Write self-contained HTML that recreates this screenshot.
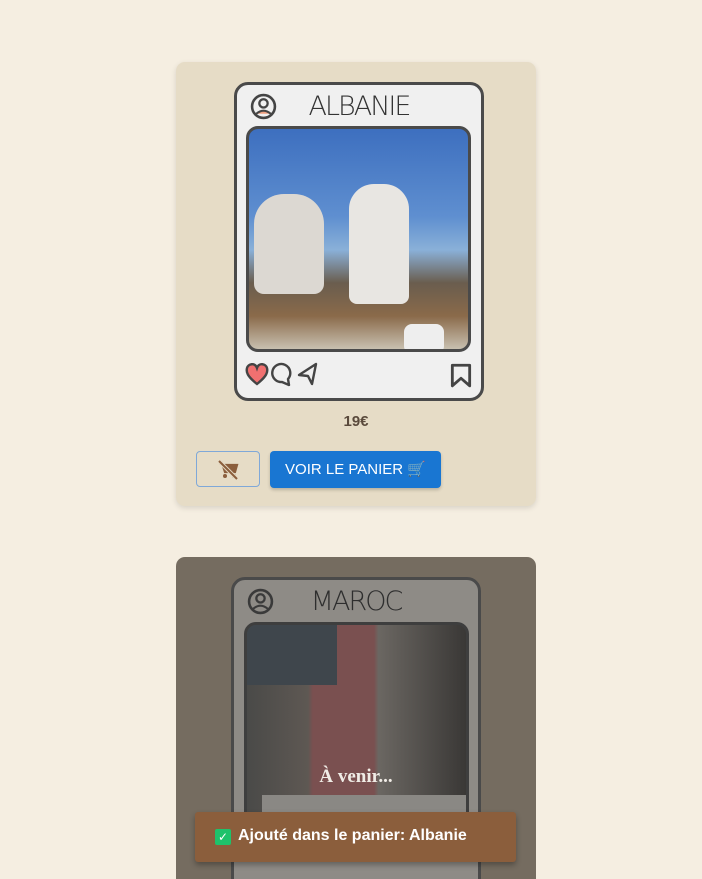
<!DOCTYPE html>
<html><head><meta charset="utf-8"><style>
html,body{margin:0;width:702px;height:879px;overflow:hidden}
body{background:#f5eee1;position:relative;font-family:"Liberation Sans",sans-serif}
.card{position:absolute;left:176px;width:360px;border-radius:9px;overflow:hidden}
.frame{position:absolute;width:244px;border:3px solid #4a4a4a;border-radius:14px;background:#f0f0f0}
.title{position:absolute;left:0;right:0;top:6px;text-align:center;font-family:"DejaVu Sans",sans-serif;font-size:27px;font-weight:200;letter-spacing:-2px;color:#333}
.photo{position:absolute;left:9px;width:219px;height:220px;border:3px solid #4a4a4a;border-radius:12px;overflow:hidden}
</style></head><body>
<div class="card" style="top:62px;height:444px;background:#e6dcc6;box-shadow:0 2px 6px rgba(0,0,0,.12)">
 <div class="frame" style="left:58px;top:20px;height:313px">
  <svg style="position:absolute;left:13px;top:8px" width="27" height="27" viewBox="0 0 26 26"><circle cx="13" cy="13" r="11" fill="none" stroke="#444" stroke-width="2.5"/><circle cx="13" cy="10" r="4" fill="none" stroke="#444" stroke-width="2.2"/><path d="M6 20q7-6 14 0" fill="#f0a080" stroke="#444" stroke-width="2"/></svg>
  <div class="title">ALBANIE</div>
  <div class="photo" style="top:41px;background:linear-gradient(180deg,#3d6fbf 0%,#5f8fd0 40%,#8ab0d8 55%,#6a5d4e 70%,#8a6a4a 85%,#c8c0b0 100%)">
   <div style="position:absolute;left:100px;top:55px;width:60px;height:120px;background:#e8e6e2;border-radius:25px 25px 8px 8px"></div>
   <div style="position:absolute;left:5px;top:65px;width:70px;height:100px;background:#dcd8d2;border-radius:30px 30px 10px 10px"></div>
   <div style="position:absolute;left:155px;top:195px;width:40px;height:30px;background:#eee;border-radius:8px"></div>
  </div>
  <svg style="position:absolute;left:8px;top:276px" width="80" height="26" viewBox="0 0 80 26"><path d="M12 23C2 15 1 11 2 7s8-6 10 0c2-6 9-4 10 0s0 8-10 16z" fill="#f07070" stroke="#444" stroke-width="2.4"/><path d="M37 21a9 9 0 1 1 6-3l1 6z" fill="none" stroke="#444" stroke-width="2.4" stroke-linejoin="round"/><path d="M54 14l17-11-4 20-4-8z" fill="none" stroke="#444" stroke-width="2.4" stroke-linejoin="round"/></svg>
  <svg style="position:absolute;left:212px;top:277px" width="24" height="26" viewBox="0 0 22 24"><path d="M3 3h16v19l-8-7-8 7z" fill="none" stroke="#444" stroke-width="2.6" stroke-linejoin="round"/></svg>
 </div>
 <div style="position:absolute;left:0;right:0;top:351px;text-align:center;font-weight:bold;font-size:15px;color:#5a4a3c">19€</div>
 <div style="position:absolute;left:20px;top:389px;width:62px;height:34px;border:1px solid #7fa8d8;border-radius:4px"><svg style="position:absolute;left:20px;top:8px" width="22" height="20" viewBox="0 0 22 20"><path d="M2 3h3l3 9h10l2-7H7" fill="#8b5e3c" stroke="#8b5e3c" stroke-width="2.2"/><circle cx="8" cy="16" r="2" fill="#8b5e3c"/><circle cx="17" cy="16" r="2" fill="#8b5e3c"/><path d="M2 1l18 18" stroke="#e6dcc6" stroke-width="4"/><path d="M2 1l18 18" stroke="#8b5e3c" stroke-width="2"/></svg></div>
 <div style="position:absolute;left:94px;top:389px;width:171px;height:37px;background:#1976d2;border-radius:4px;box-shadow:0 2px 3px rgba(0,0,0,.2);color:#fff;font-size:15px;line-height:37px;text-align:center">VOIR LE PANIER 🛒</div>
</div>
<div class="card" style="top:557px;height:340px;background:#756c60">
 <div class="frame" style="left:55px;top:20px;height:330px;background:#8e8b86">
  <svg style="position:absolute;left:13px;top:8px" width="27" height="27" viewBox="0 0 26 26"><circle cx="13" cy="13" r="11" fill="none" stroke="#3a3a3a" stroke-width="2.5"/><circle cx="13" cy="10" r="4" fill="none" stroke="#3a3a3a" stroke-width="2.2"/><path d="M6 20q7-6 14 0" fill="none" stroke="#3a3a3a" stroke-width="2"/></svg>
  <div class="title" style="color:#2e2e2e">MAROC</div>
  <div class="photo" style="top:42px;left:10px;border-color:#3e3e3e;background:linear-gradient(90deg,#4a4a48 0%,#5e5853 28%,#7a5050 30%,#7a5050 58%,#6b6762 60%,#3a3836 100%)">
   <div style="position:absolute;left:0;top:0;width:90px;height:60px;background:#3f464c"></div>
   <div style="position:absolute;left:15px;top:170px;width:210px;height:20px;background:#8a8884"></div>
  </div>
 </div>
 <div style="position:absolute;left:0;right:0;top:209px;text-align:center;font-family:'Liberation Serif',serif;font-weight:bold;font-size:19px;color:#f0ece6">À venir...</div>
</div>
<div style="position:absolute;left:195px;top:812px;width:321px;height:50px;background:#8b5e3c;border-radius:3px;box-shadow:0 3px 6px rgba(0,0,0,.3)">
 <div style="position:absolute;left:20px;top:17px;width:16px;height:16px;background:#1ec26b;border-radius:2px;color:#fff;font-size:12px;line-height:16px;text-align:center">✓</div>
 <div style="position:absolute;left:43px;top:15px;color:#fff;font-weight:bold;font-size:16px">Ajouté dans le panier: Albanie</div>
</div>
</body></html>
